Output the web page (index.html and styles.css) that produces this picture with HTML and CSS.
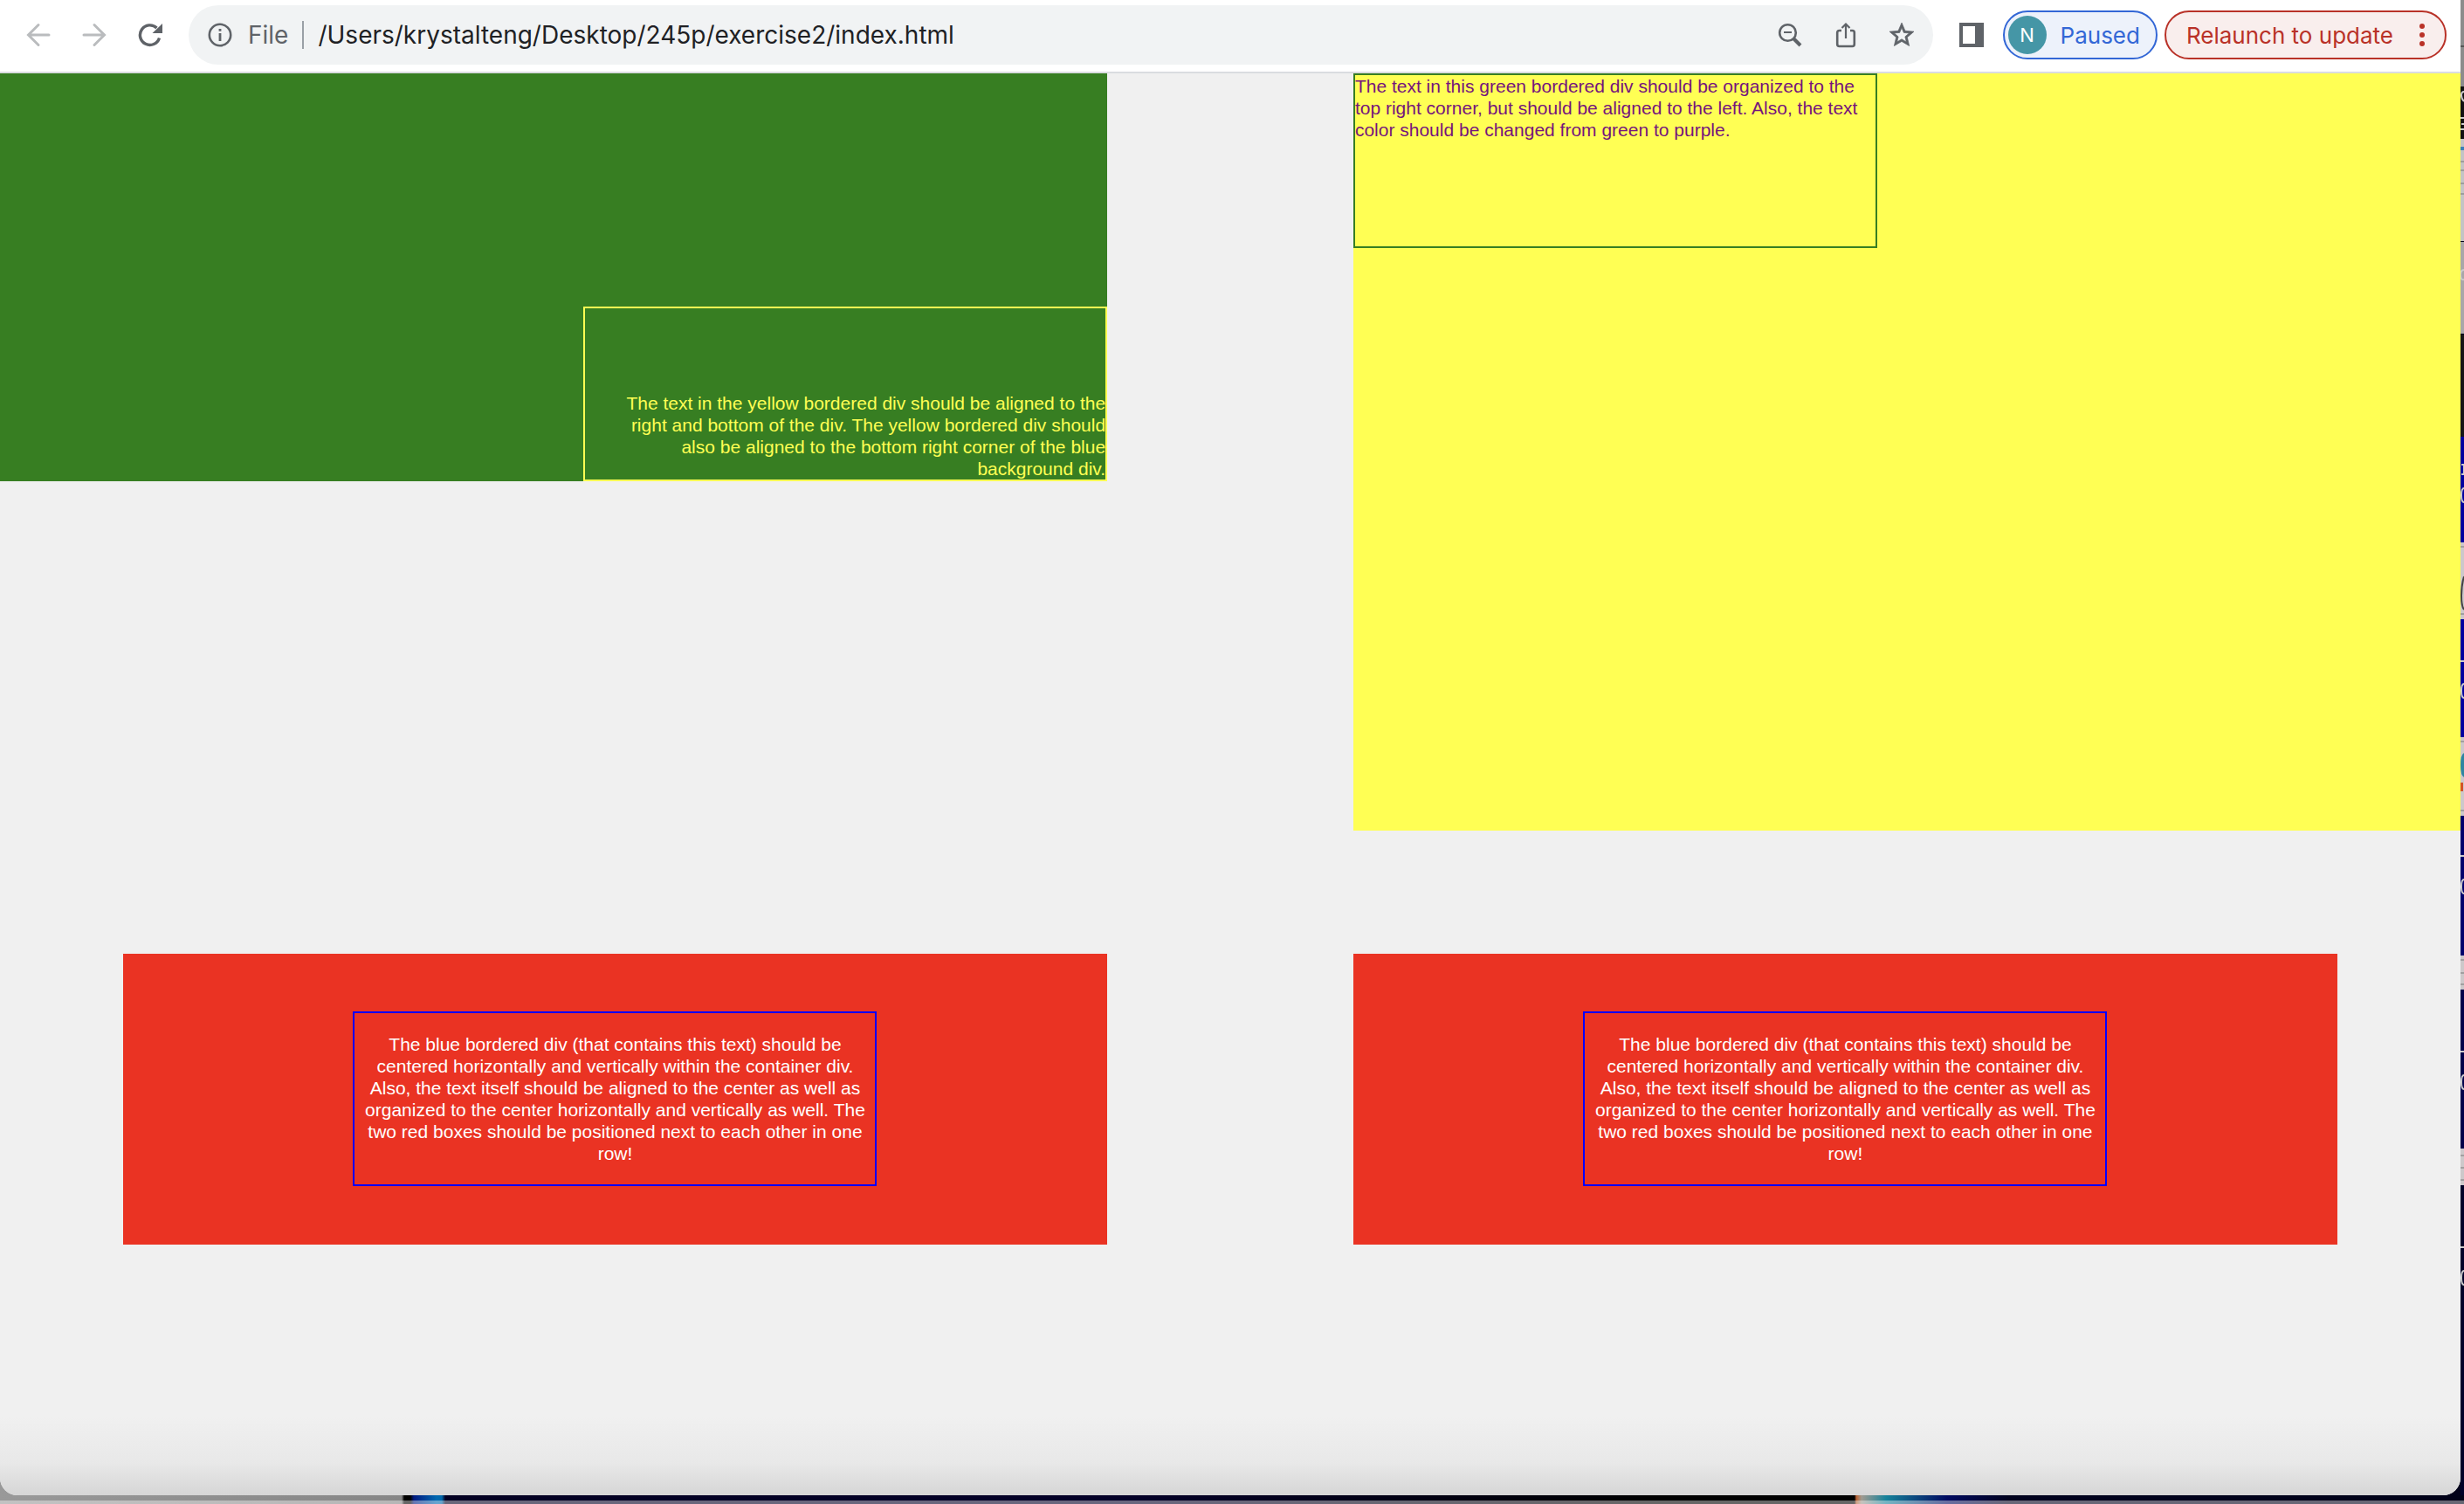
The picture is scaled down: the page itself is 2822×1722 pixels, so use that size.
FILE: index.html
```html
<!DOCTYPE html>
<html lang="en">
<head>
<meta charset="utf-8">
<title>index.html</title>
<link rel="stylesheet" href="styles.css">
</head>
<body>
<div class="desktop">
  <div class="window">
    <header class="toolbar">
      <nav class="nav">
        <button class="icon-btn faded" aria-label="Back"><svg width="28" height="28" viewBox="0 0 28 28"><path d="M26 14H3M14 2.500L2.500 14L14 25.500" fill="none" stroke="currentColor" stroke-width="3" stroke-linecap="round"/></svg></button>
        <button class="icon-btn faded" aria-label="Forward"><svg width="28" height="28" viewBox="0 0 28 28"><path d="M2 14H25M14 2.500L25.500 14L14 25.500" fill="none" stroke="currentColor" stroke-width="3" stroke-linecap="round"/></svg></button>
        <button class="icon-btn" aria-label="Reload"><svg width="28" height="28" viewBox="0 0 28 28"><path d="M24.500 17.500A11.300 11.300 0 1 1 21.500 6" fill="none" stroke="currentColor" stroke-width="3.400"/><path d="M28 1V12H16.500Z" fill="currentColor"/></svg></button>
      </nav>
      <div class="omnibox">
        <button class="icon-btn" aria-label="Site information"><svg width="28" height="28" viewBox="0 0 28 28"><circle cx="14" cy="14" r="12.200" fill="none" stroke="currentColor" stroke-width="2.600"/><path d="M12.600 7H15.400V9.800H12.600ZM12.600 12H15.400V21H12.600Z" fill="currentColor"/></svg></button>
        <label class="scheme" for="address">File</label>
        <span class="divider"></span>
        <input class="address" id="address" type="text" value="/Users/krystalteng/Desktop/245p/exercise2/index.html">
        <div class="page-actions">
          <button class="icon-btn" aria-label="Zoom"><svg width="28" height="28" viewBox="0 0 28 28"><circle cx="11.500" cy="11.500" r="9.300" fill="none" stroke="currentColor" stroke-width="2.600"/><path d="M7 11H16" stroke="currentColor" stroke-width="2"/><path d="M18 18L26 26" stroke="currentColor" stroke-width="4"/></svg></button>
          <button class="icon-btn" aria-label="Share"><svg width="28" height="30" viewBox="0 0 28 30"><path d="M9 10H6.500Q4.200 10 4.200 12.300V25.500Q4.200 28 6.500 28H21.500Q23.800 28 23.800 25.500V12.300Q23.800 10 21.500 10H19" fill="none" stroke="currentColor" stroke-width="2.600"/><path d="M14 19V3M9.500 7L14 2.500L18.500 7" fill="none" stroke="currentColor" stroke-width="2.200"/></svg></button>
          <button class="icon-btn" aria-label="Bookmark"><svg width="28" height="28" viewBox="2 2 20 20"><path d="M22 9.240l-7.190-.62L12 2 9.190 8.630 2 9.240l5.460 4.730L5.820 21 12 17.270 18.180 21l-1.630-7.030L22 9.240zM12 15.400l-3.760 2.270 1-4.280-3.320-2.880 4.380-.38L12 6.100l1.710 4.040 4.380.38-3.320 2.880 1 4.280L12 15.400z" fill="currentColor" stroke="currentColor" stroke-width=".5"/></svg></button>
        </div>
      </div>
      <button class="icon-btn" aria-label="Side panel"><svg width="28" height="28" viewBox="0 0 28 28"><path d="M0 0H28V28H0ZM4 4V24H18V4Z" fill="currentColor" fill-rule="evenodd"/></svg></button>
      <div class="pills">
        <button class="pill profile"><span class="avatar">N</span>Paused</button>
        <button class="pill relaunch">Relaunch to update<svg width="6" height="28" viewBox="0 0 6 28"><circle cx="3" cy="4" r="3"/><circle cx="3" cy="14" r="3"/><circle cx="3" cy="24" r="3"/></svg></button>
      </div>
    </header>
    <main class="page">
      <section class="row top">
        <div class="panel green"><div class="box box-yellow">The text in the yellow bordered div should be aligned to the right and bottom of the div. The yellow bordered div should also be aligned to the bottom right corner of the blue background div.</div></div>
        <div class="panel yellow"><div class="box box-green">The text in this green bordered div should be organized to the top right corner, but should be aligned to the left. Also, the text color should be changed from green to purple.</div></div>
      </section>
      <section class="row">
        <div class="red"><div class="box box-blue">The blue bordered div (that contains this text) should be centered horizontally and vertically within the container div. Also, the text itself should be aligned to the center as well as organized to the center horizontally and vertically as well. The two red boxes should be positioned next to each other in one row!</div></div>
        <div class="red"><div class="box box-blue">The blue bordered div (that contains this text) should be centered horizontally and vertically within the container div. Also, the text itself should be aligned to the center as well as organized to the center horizontally and vertically as well. The two red boxes should be positioned next to each other in one row!</div></div>
      </section>
    </main>
  </div>
  <svg class="wallpaper-edge" viewBox="0 0 4 1712" preserveAspectRatio="none" aria-hidden="true">
    <path fill="#8c8c8c" d="M0 0H4V99H0Z"/>
    <path fill="#555" d="M0 52H4V54H0Z"/>
    <path fill="#111" d="M0 99H4V159H0Z"/>
    <path fill="#c4c4c4" d="M0 159H4V276H0Z"/>
    <path fill="#a9a7a8" d="M0 277H4V382H0Z"/>
    <path fill="#161616" d="M0 383H4V500H0Z"/>
    <path fill="#0000a0" d="M0 500H4V621H0ZM0 709H4V844H0Z"/>
    <path fill="#cdc8ca" d="M0 621H4V709H0ZM0 844H4V934H0ZM0 1094H4V1133H0ZM0 1315H4V1357H0Z"/>
    <path fill="#00006c" d="M0 934H4V1094H0Z"/>
    <path fill="#00004a" d="M0 1133H4V1315H0Z"/>
    <path fill="#000028" d="M0 1357H4V1712H0Z"/>
    <path fill="#2f86a0" d="M4 862Q0 864 0 876Q0 888 4 890Z"/>
    <path fill="#d4532a" d="M0 896H3V906H0Z"/>
    <path fill="#3c7fb8" d="M0 168H4V172H0Z"/>
    <path fill="none" stroke="#777" d="M0 185H4M0 195H4M0 210H4M0 222H4M0 626H4M0 703H4M0 849H4M0 928H4M0 1099H4M0 1114H4M0 1127H4M0 1323H4M0 1337H4M0 1351H4"/>
    <path fill="none" stroke="#444" stroke-width="2" d="M4 660Q1 670 1 682Q1 694 4 698"/>
    <path fill="none" stroke="#ccc" stroke-width="2" d="M4 105Q1 105 1 109T4 116M0 135H4M1 142H4M0 148H4M4 309Q0 309 0 315T4 320M1 532H4V543H1M0 757H4M0 980H4M0 1204H4M0 1428H4M4 559Q1 559 1 567T4 575M4 783Q1 783 1 791T4 799M4 1007Q1 1007 1 1015T4 1023M4 1231Q1 1231 1 1239T4 1247M4 1455Q1 1455 1 1463T4 1471"/>
  </svg>
  <div class="dock-edge"></div>
</div>
</body>
</html>
```
FILE: styles.css
```css
* {
  box-sizing: border-box;
}

body {
  margin: 0;
  font-family: "Liberation Sans", Arial, sans-serif;
}

.desktop {
  display: grid;
  grid-template-columns: minmax(0, 1fr) 4px;
  grid-template-rows: 1fr 10px;
  min-height: 100vh;
  background: linear-gradient(90deg, #999 0, #888 460px, #02021a 520px);
}

.window {
  display: flex;
  flex-direction: column;
  overflow: hidden;
  border-radius: 0 0 20px 20px;
  background: #f0f0f0;
}

.wallpaper-edge {
  width: 4px;
  height: 100%;
}

.dock-edge {
  grid-column: 1 / -1;
  background:
    linear-gradient(transparent 6px, rgba(255, 255, 255, 0.4) 6px),
    linear-gradient(90deg, #999 0, #868686 460px, #000 463px, #000 470px, #001a80 474px, #0068b0 500px, #06a 506px, #030022 510px, #040028 1300px, #000 1900px, #000 2124px, #b86030 2126px, #a09a90 2132px, #16829a 2160px, #000a60 2230px, #01021e 2300px, #010218 100%);
}

.toolbar {
  display: flex;
  align-items: center;
  height: 84px;
  padding: 0 16px 2px 30px;
  border-bottom: 2px solid #dadce0;
  background: #fff;
  color: #5f6368;
  font-family: Inter, Roboto, sans-serif;
  font-size: 26px;
}

.icon-btn {
  display: flex;
  flex: none;
  padding: 0;
  border: 0;
  background: none;
  color: #5f6368;
}

.faded {
  color: #babcbe;
}

.nav {
  display: flex;
  gap: 36px;
  margin-right: 30px;
}

.omnibox {
  display: flex;
  flex: 1;
  align-items: center;
  height: 68px;
  margin-right: 30px;
  padding: 0 22px;
  border-radius: 34px;
  background: #f1f3f4;
  font-size: 28px;
}

.scheme {
  margin-left: 18px;
}

.divider {
  width: 2px;
  height: 32px;
  margin: 0 16px;
  background: #9aa0a6;
}

.address {
  flex: 1;
  min-width: 0;
  padding: 0;
  border: 0;
  background: none;
  color: #202124;
  font: inherit;
}

.page-actions {
  display: flex;
  align-items: center;
  gap: 36px;
}

.pills {
  display: flex;
  gap: 8px;
  margin-left: 22px;
}

.pill {
  display: flex;
  align-items: center;
  height: 56px;
  border: 2px solid;
  border-radius: 28px;
  font: inherit;
}

.profile {
  gap: 16px;
  padding: 0 18px 0 4px;
  background: #edf2fb;
  color: #3367d6;
}

.avatar {
  display: grid;
  place-items: center;
  width: 44px;
  height: 44px;
  border-radius: 50%;
  background: #4596a6;
  color: #fff;
  font-size: 22px;
}

.relaunch {
  gap: 30px;
  padding: 0 23px;
  background: #f9eeed;
  color: #b93228;
}

.relaunch svg {
  fill: currentColor;
}

.page {
  flex: 1;
  background: linear-gradient(#f0f0f0 calc(100% - 90px), #e8e8e8 calc(100% - 36px), #d6d6d6);
  font-size: 21px;
  line-height: 25px;
}

.row {
  display: flex;
}

.top {
  align-items: flex-start;
  justify-content: space-between;
}

.panel {
  display: flex;
  width: 45%;
}

.green {
  align-items: flex-end;
  justify-content: flex-end;
  height: 467px;
  background: #377e22;
}

.yellow {
  align-items: flex-start;
  height: 867px;
  background: #ffff54;
}

.red {
  display: flex;
  align-items: center;
  justify-content: center;
  width: 40%;
  height: 333px;
  margin: 5%;
  background: #ea3323;
}

.box {
  display: flex;
  width: 600px;
  height: 200px;
  border: 2px solid;
}

.box-yellow {
  align-items: flex-end;
  padding-left: 20px;
  color: #ffff54;
  text-align: right;
}

.box-green {
  border-color: #377e22;
  color: #75147c;
}

.box-blue {
  align-items: center;
  border-color: #00f;
  color: #fff;
  text-align: center;
}
```
